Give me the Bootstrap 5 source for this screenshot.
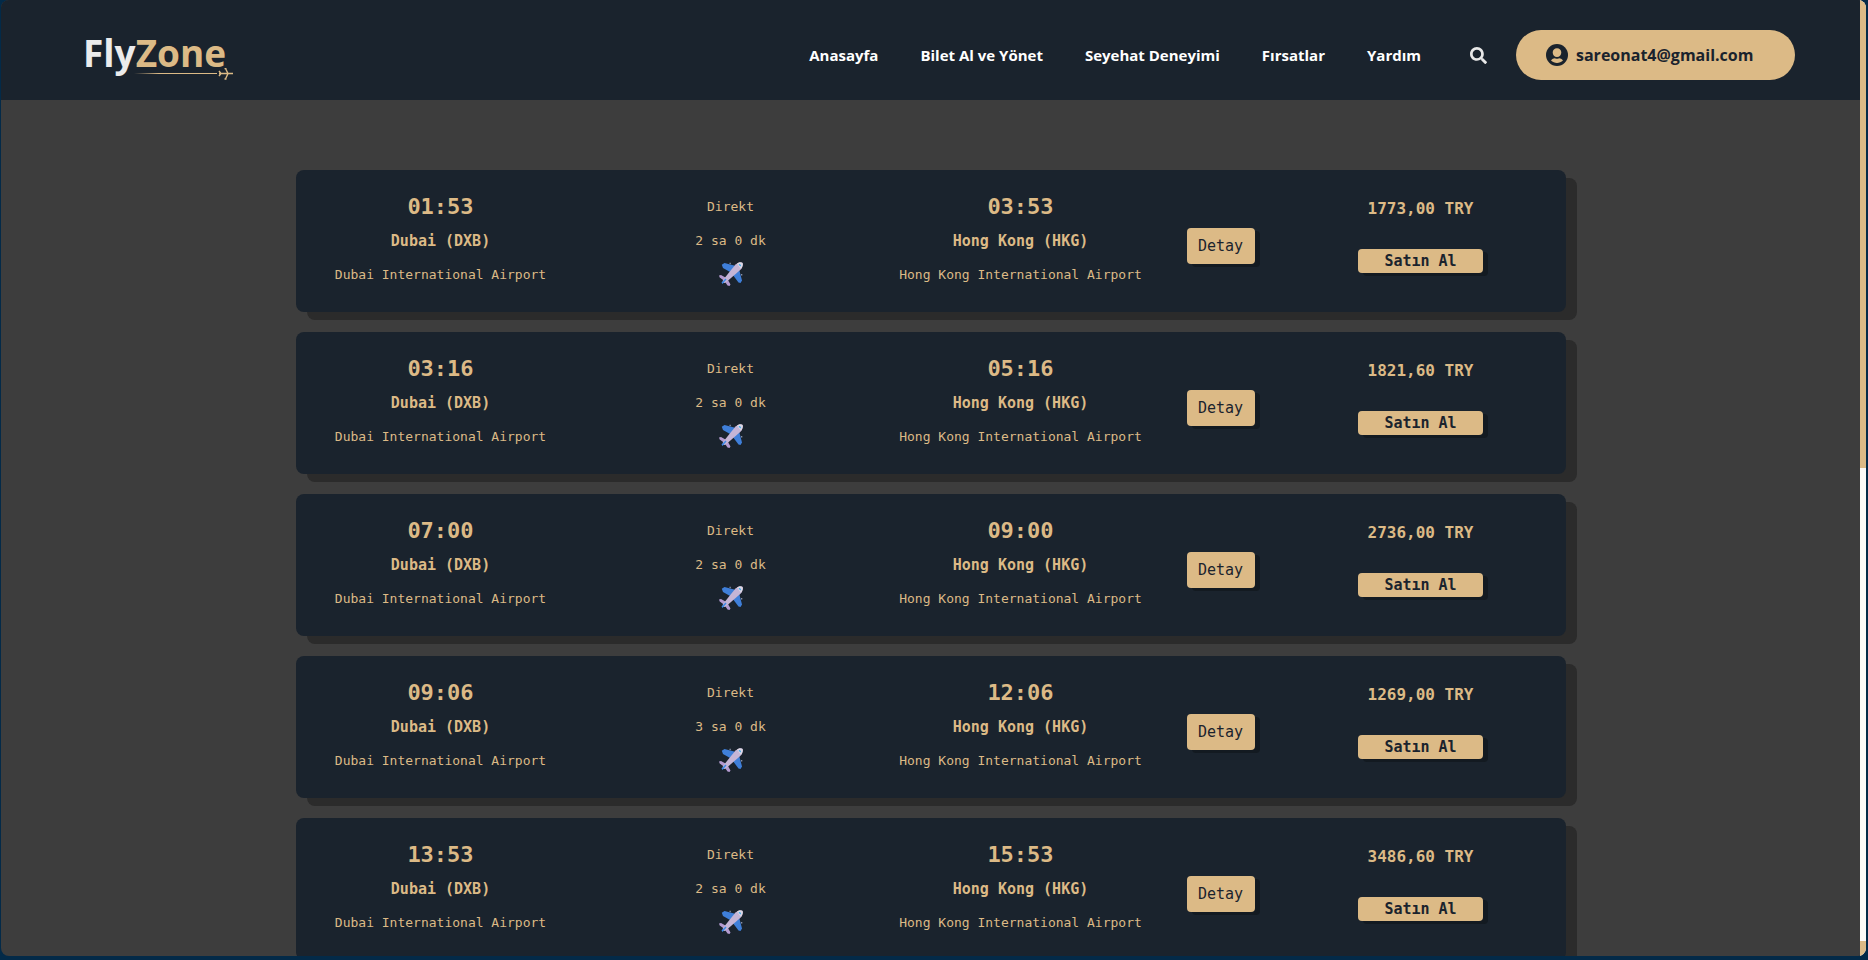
<!DOCTYPE html>
<html lang="tr">
<head>
<meta charset="utf-8">
<meta name="viewport" content="width=device-width, initial-scale=1">
<title>FlyZone</title>
<link rel="stylesheet" href="https://cdn.jsdelivr.net/npm/bootstrap@5.3.0/dist/css/bootstrap.min.css">
<style>
  :root { --navy:#1a232d; --tan:#dcba86; --page:#3d3d3d; }
  body { background:#032a48; height:100vh; padding:0 2px 4px 1px; }
  .app-frame { background:var(--page); border-radius:8px; }
  .site-header { background:var(--navy); min-height:100px; padding:10px 65px 0 82px; }
  .brand { font:700 37px/44px "Open Sans", sans-serif; color:#ececec; position:relative; padding:0 8px 4px 0; }
  .brand span { color:var(--tan); }
  .brand svg { position:absolute; right:0; bottom:-1px; }
  .main-menu { gap:42px; font:700 15px/24px "Open Sans", sans-serif; }
  .main-menu a { color:#fff; }
  .search-btn { margin:0 29px 0 49px; color:#e8e8e8; line-height:1; }
  .account-btn { background:var(--tan); color:var(--navy); width:279px; height:50px; padding:0 30px; font:700 16px/24px "Open Sans", sans-serif; }
  .flights { max-width:1270px; gap:20px; padding-top:70px; }
  .flight { background:var(--navy); color:var(--tan); border-radius:8px; box-shadow:11px 8px 0 #2b2b2b; height:142px; flex:none;
    display:grid; grid-template-columns:29fr 29fr 29fr 11fr 29fr; text-align:center; padding-top:20px;
    font:13px/34px "DejaVu Sans Mono", monospace; }
  .flight .clock { font-size:22px; font-weight:700; }
  .flight .city { font-size:15px; font-weight:700; }
  .flight .price { font-size:16px; font-weight:700; line-height:38px; }
  .tan-btn { background:var(--tan); color:var(--navy); border:0; border-radius:4px; box-shadow:5px 3px 0 #131a21; font-size:15px; }
  .detail-btn { width:68px; height:36px; margin-top:38px; line-height:36px; }
  .buy-btn { width:125px; height:24px; margin-top:21px; line-height:24px; font-weight:700; }
  .scroll-track { width:6px; background:#fcfaf8; }
  .scroll-thumb { height:49%; background:var(--tan); }
  .scroll-end { height:15px; background:var(--tan); }
</style>
<script src="https://cdn.jsdelivr.net/npm/bootstrap@5.3.0/dist/js/bootstrap.bundle.min.js"></script>
</head>
<body class="overflow-hidden">
<svg class="d-none">
  <symbol id="plane" viewBox="0 0 24 24">
    <path d="M2.800 2.800 5.500 1 17 4 12 10.500 4 6Z" fill="#3f7fd9"/>
    <path d="M21.500 21 23 18.500 20 7 13.500 12.500 19.500 20.500Z" fill="#3f7fd9"/>
    <path d="M10.500 2V.8h1.300v1.500ZM22 13.500h1.300v-1.500H22Z" fill="#8b91a5"/>
    <path d="M0 13.500 2 13 6.500 15.500 9 18 11.500 22.500 10.500 24 8.500 23.500 5.500 19 .7 15.500Z" fill="#b49bd0"/>
    <path d="M4 18 16.500 2.500C18.800.3 22 0 23.300.8 24.500 2 23.500 5.500 21.500 7.800L6.800 20.500C5 21.500 3 20.500 4 18Z" fill="#c5b5d6"/>
    <path d="M18 1.500C20 0 22.500 0 23.300.8 24.500 2 23.500 4.800 22 7Z" fill="#dcd7e5"/>
    <path d="M19.500 2.500 21 2 22 3.500 21.500 4.500Z" fill="#37a6e8"/>
    <path d="M2.500 20.500 6.500 16.500 7.500 17.500 3.500 22Z" fill="#3e8ae8"/>
  </symbol>
</svg>
<div class="app-frame d-flex h-100 overflow-hidden">
  <div class="flex-grow-1 d-flex flex-column overflow-hidden">
    <header class="site-header d-flex align-items-center flex-shrink-0">
      <a href="#" class="brand text-decoration-none">Fly<span>Zone</span>
        <svg width="100" height="12" viewBox="0 0 100 12" aria-hidden="true">
          <defs><linearGradient id="trail"><stop stop-color="#dcba86" stop-opacity="0"/><stop offset=".3" stop-color="#dcba86"/></linearGradient></defs>
          <rect y="5" width="83" height="1" fill="url(#trail)"/>
          <path d="M85 5.500H99M91.500.5 94 5.500 91.500 11M85 3 87 5.500 85 8M90.500.5h2M90.500 11h2" fill="none" stroke="#dcba86" stroke-width="1.400"/>
        </svg>
      </a>
      <nav class="main-menu d-flex ms-auto">
        <a class="text-decoration-none" href="#">Anasayfa</a>
        <a class="text-decoration-none" href="#">Bilet Al ve Yönet</a>
        <a class="text-decoration-none" href="#">Seyehat Deneyimi</a>
        <a class="text-decoration-none" href="#">Fırsatlar</a>
        <a class="text-decoration-none" href="#">Yardım</a>
      </nav>
      <button class="search-btn btn p-0 border-0" aria-label="Ara"><svg width="17" height="17" viewBox="0 0 512 512" fill="currentColor"><path d="M505 442.700 405.300 343c-4.500-4.500-10.600-7-17-7H372c27.600-35.300 44-79.700 44-128C416 93.100 322.900 0 208 0S0 93.100 0 208s93.100 208 208 208c48.300 0 92.700-16.400 128-44v16.300c0 6.400 2.500 12.500 7 17l99.700 99.700c9.400 9.400 24.600 9.400 33.900 0l28.300-28.300c9.400-9.400 9.400-24.600.1-34zM208 336c-70.700 0-128-57.200-128-128 0-70.700 57.200-128 128-128 70.700 0 128 57.200 128 128 0 70.700-57.200 128-128 128z"/></svg></button>
      <button class="account-btn btn rounded-pill border-0 d-flex align-items-center gap-2">
        <svg class="flex-shrink-0" width="22" height="22" viewBox="0 0 22 22"><circle cx="11" cy="11" r="11" fill="#1a232d"/><path d="M11 4.300c2.500 0 4.300 1.700 4.300 4.200S13.500 13 11 13 6.700 11 6.700 8.500 8.500 4.300 11 4.300ZM5 16.600c1.200-1.700 3-2.400 4.300-2.200 1.200.3 2.200.3 3.400 0 1.300-.2 3.100.5 4.300 2.200-3.200 3.300-8.800 3.300-12 0Z" fill="#dcba86"/></svg>
        <span>sareonat4@gmail.com</span>
      </button>
    </header>
    <main class="flights container-fluid px-0 d-flex flex-column">
      <article class="flight">
        <div><div class="clock">01:53</div><div class="city">Dubai (DXB)</div><div>Dubai International Airport</div></div>
        <div><div>Direkt</div><div>2 sa 0 dk</div><svg class="d-block mx-auto mt-1" width="24" height="24"><use href="#plane"/></svg></div>
        <div><div class="clock">03:53</div><div class="city">Hong Kong (HKG)</div><div>Hong Kong International Airport</div></div>
        <div><button class="tan-btn detail-btn p-0">Detay</button></div>
        <div><div class="price">1773,00 TRY</div><button class="tan-btn buy-btn p-0 d-block mx-auto">Satın Al</button></div>
      </article>
      <article class="flight">
        <div><div class="clock">03:16</div><div class="city">Dubai (DXB)</div><div>Dubai International Airport</div></div>
        <div><div>Direkt</div><div>2 sa 0 dk</div><svg class="d-block mx-auto mt-1" width="24" height="24"><use href="#plane"/></svg></div>
        <div><div class="clock">05:16</div><div class="city">Hong Kong (HKG)</div><div>Hong Kong International Airport</div></div>
        <div><button class="tan-btn detail-btn p-0">Detay</button></div>
        <div><div class="price">1821,60 TRY</div><button class="tan-btn buy-btn p-0 d-block mx-auto">Satın Al</button></div>
      </article>
      <article class="flight">
        <div><div class="clock">07:00</div><div class="city">Dubai (DXB)</div><div>Dubai International Airport</div></div>
        <div><div>Direkt</div><div>2 sa 0 dk</div><svg class="d-block mx-auto mt-1" width="24" height="24"><use href="#plane"/></svg></div>
        <div><div class="clock">09:00</div><div class="city">Hong Kong (HKG)</div><div>Hong Kong International Airport</div></div>
        <div><button class="tan-btn detail-btn p-0">Detay</button></div>
        <div><div class="price">2736,00 TRY</div><button class="tan-btn buy-btn p-0 d-block mx-auto">Satın Al</button></div>
      </article>
      <article class="flight">
        <div><div class="clock">09:06</div><div class="city">Dubai (DXB)</div><div>Dubai International Airport</div></div>
        <div><div>Direkt</div><div>3 sa 0 dk</div><svg class="d-block mx-auto mt-1" width="24" height="24"><use href="#plane"/></svg></div>
        <div><div class="clock">12:06</div><div class="city">Hong Kong (HKG)</div><div>Hong Kong International Airport</div></div>
        <div><button class="tan-btn detail-btn p-0">Detay</button></div>
        <div><div class="price">1269,00 TRY</div><button class="tan-btn buy-btn p-0 d-block mx-auto">Satın Al</button></div>
      </article>
      <article class="flight">
        <div><div class="clock">13:53</div><div class="city">Dubai (DXB)</div><div>Dubai International Airport</div></div>
        <div><div>Direkt</div><div>2 sa 0 dk</div><svg class="d-block mx-auto mt-1" width="24" height="24"><use href="#plane"/></svg></div>
        <div><div class="clock">15:53</div><div class="city">Hong Kong (HKG)</div><div>Hong Kong International Airport</div></div>
        <div><button class="tan-btn detail-btn p-0">Detay</button></div>
        <div><div class="price">3486,60 TRY</div><button class="tan-btn buy-btn p-0 d-block mx-auto">Satın Al</button></div>
      </article>
    </main>
  </div>
  <div class="scroll-track d-flex flex-column justify-content-between flex-shrink-0" aria-hidden="true"><div class="scroll-thumb"></div><div class="scroll-end"></div></div>
</div>
</body>
</html>
